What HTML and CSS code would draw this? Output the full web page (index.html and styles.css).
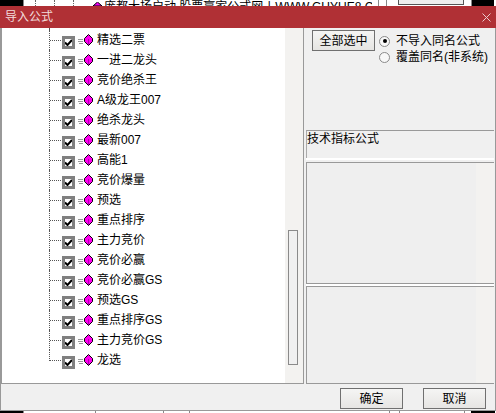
FILE: index.html
```html
<!DOCTYPE html>
<html lang="zh">
<head>
<meta charset="utf-8">
<title>导入公式</title>
<link rel="stylesheet" href="styles.css">
</head>
<body>
<svg class="defs" width="0" height="0">
  <symbol id="ck" viewBox="0 0 7 7"><path d="M0 3.500L2.500 6L7 1" fill="none" stroke="#000" stroke-width="2"/></symbol>
  <symbol id="gem" viewBox="0 0 16 12">
    <path d="M0 5.500h5M0 7.500h5M1 9.500h4" stroke="#999" stroke-width="1" shape-rendering="crispEdges"/>
    <path d="M10.500 .5L14.500 4.500V7.500L10.500 11.500L6.500 7.500V4.500Z" fill="#ff00f0" stroke="#000" stroke-width="1"/>
    <path d="M10.500 5V11" stroke="#b000b0" stroke-width="1" fill="none"/>
  </symbol>
</svg>
<div class="behind">
  <span class="black"></span>
  <i class="tick t1"></i><i class="tick t2"></i><i class="tick t3"></i>
  <svg class="peek" width="9" height="4" viewBox="0 0 9 4"><path d="M4.500 0L9 4H0Z" fill="#f000f0" stroke="#000" stroke-width="1"/></svg>
  <span class="behind-text">庞都大扬启动 股票赢家公式网丨WWW.GUYUE8.C</span>
  <i class="rule r1"></i><i class="rule r2"></i>
  <span class="behind-btn"></span>
  <span class="black end"></span>
</div>
<div class="dialog">
  <header class="titlebar">
    <span>导入公式</span>
    <svg class="close" width="9" height="9" viewBox="0 0 9 9"><path d="M.5.5L8.500 8.500M8.500.5L.5 8.500" stroke="#fff" stroke-width="1" opacity=".75"/></svg>
  </header>
  <div class="main">
    <section class="tree">
      <ul class="rows">
        <li class="row"><i class="branch"></i><span class="check"><svg><use href="#ck"/></svg></span><svg class="gem"><use href="#gem"/></svg><span>精选二票</span></li>
        <li class="row"><i class="branch"></i><span class="check"><svg><use href="#ck"/></svg></span><svg class="gem"><use href="#gem"/></svg><span>一进二龙头</span></li>
        <li class="row"><i class="branch"></i><span class="check"><svg><use href="#ck"/></svg></span><svg class="gem"><use href="#gem"/></svg><span>竞价绝杀王</span></li>
        <li class="row"><i class="branch"></i><span class="check"><svg><use href="#ck"/></svg></span><svg class="gem"><use href="#gem"/></svg><span>A级龙王007</span></li>
        <li class="row"><i class="branch"></i><span class="check"><svg><use href="#ck"/></svg></span><svg class="gem"><use href="#gem"/></svg><span>绝杀龙头</span></li>
        <li class="row"><i class="branch"></i><span class="check"><svg><use href="#ck"/></svg></span><svg class="gem"><use href="#gem"/></svg><span>最新007</span></li>
        <li class="row"><i class="branch"></i><span class="check"><svg><use href="#ck"/></svg></span><svg class="gem"><use href="#gem"/></svg><span>高能1</span></li>
        <li class="row"><i class="branch"></i><span class="check"><svg><use href="#ck"/></svg></span><svg class="gem"><use href="#gem"/></svg><span>竞价爆量</span></li>
        <li class="row"><i class="branch"></i><span class="check"><svg><use href="#ck"/></svg></span><svg class="gem"><use href="#gem"/></svg><span>预选</span></li>
        <li class="row"><i class="branch"></i><span class="check"><svg><use href="#ck"/></svg></span><svg class="gem"><use href="#gem"/></svg><span>重点排序</span></li>
        <li class="row"><i class="branch"></i><span class="check"><svg><use href="#ck"/></svg></span><svg class="gem"><use href="#gem"/></svg><span>主力竞价</span></li>
        <li class="row"><i class="branch"></i><span class="check"><svg><use href="#ck"/></svg></span><svg class="gem"><use href="#gem"/></svg><span>竞价必赢</span></li>
        <li class="row"><i class="branch"></i><span class="check"><svg><use href="#ck"/></svg></span><svg class="gem"><use href="#gem"/></svg><span>竞价必赢GS</span></li>
        <li class="row"><i class="branch"></i><span class="check"><svg><use href="#ck"/></svg></span><svg class="gem"><use href="#gem"/></svg><span>预选GS</span></li>
        <li class="row"><i class="branch"></i><span class="check"><svg><use href="#ck"/></svg></span><svg class="gem"><use href="#gem"/></svg><span>重点排序GS</span></li>
        <li class="row"><i class="branch"></i><span class="check"><svg><use href="#ck"/></svg></span><svg class="gem"><use href="#gem"/></svg><span>主力竞价GS</span></li>
        <li class="row last"><i class="branch"></i><span class="check"><svg><use href="#ck"/></svg></span><svg class="gem"><use href="#gem"/></svg><span>龙选</span></li>
      </ul>
      <div class="scrolltrack"><div class="thumb"></div></div>
    </section>
    <aside class="side">
      <div class="options">
        <button class="btn">全部选中</button>
        <div class="radios">
          <label class="radio"><i class="dot on"></i>不导入同名公式</label>
          <label class="radio"><i class="dot"></i>覆盖同名(非系统)</label>
        </div>
      </div>
      <div class="caption">技术指标公式</div>
      <div class="pane tall"><div class="panetrack"></div></div>
      <div class="pane short"><div class="panetrack"></div></div>
    </aside>
  </div>
  <footer class="actions">
    <button class="btn">确定</button>
    <button class="btn">取消</button>
  </footer>
</div>
<div class="under">
  <span class="black"></span>
  <i class="rule u1"></i><i class="rule u2"></i><i class="rule u3"></i>
  <i class="rule u4"></i><i class="rule u5"></i><i class="rule u6"></i>
  <span class="black uend"></span>
</div>
</body>
</html>
```
FILE: styles.css
```css
* { box-sizing: border-box; }
html, body { margin: 0; padding: 0; }
body {
  width: 496px;
  height: 413px;
  overflow: hidden;
  background: #fff;
  font: 12px/16px "Liberation Sans", "Noto Sans CJK SC", sans-serif;
  color: #000;
}
.defs { display: block; height: 0; }
.behind, .under {
  display: flex;
  overflow: hidden;
  background: #fff;
}
.behind { height: 6px; }
.under { height: 2px; }
.black {
  width: 23px;
  flex: none;
  background: #000;
  border-right: 1px solid #888;
  box-sizing: content-box;
}
.black.end { width: 22px; margin-left: 7px; border-right: 0; border-left: 1px solid #888; }
.tick { width: 0; height: 6px; flex: none; border-left: 1px dotted #666; }
.t1 { margin-left: 11px; }
.t2 { margin-left: 18px; }
.t3 { margin-left: 18px; }
.peek { margin: 2px 0 0 19px; flex: none; }
.behind-text {
  margin: -1px 0 0 2px;
  width: 268px;
  flex: none;
  white-space: nowrap;
  overflow: hidden;
  height: 16px;
}
.rule { width: 0; flex: none; border-left: 1px solid #888; }
.r1 { margin-left: 6px; }
.r2 { margin-left: 7px; }
.behind-btn {
  width: 66px;
  height: 5px;
  margin-left: 11px;
  flex: none;
  border: 1px solid #555;
  border-top: 0;
  background: #eee;
}
.u1 { margin-left: 71px; }
.u2 { margin-left: 67px; }
.u3 { margin-left: 25px; }
.u4 { margin-left: 199px; }
.u5 { margin-left: 9px; }
.u6 { margin-left: 64px; }
.uend { margin-left: 6px; width: 24px; border-right: 0; }
.dialog {
  height: 405px;
  display: flex;
  flex-direction: column;
  background: #f0f0f0;
  border: solid #999;
  border-width: 0 1px 1px 1px;
}
.titlebar {
  height: 22px;
  margin: 0 -1px;
  padding: 0 5px;
  flex: none;
  display: flex;
  align-items: center;
  justify-content: space-between;
  background: #b03035;
  color: #f2dcdc;
}
.main {
  height: 356px;
  flex: none;
  display: flex;
}
.tree {
  width: 303px;
  flex: none;
  display: flex;
  background: #fff;
  border: solid #999;
  border-width: 0 1px 1px 1px;
}
.rows {
  list-style: none;
  margin: 0;
  padding: 2px 0 0;
  flex: 1;
  min-width: 0;
}
.row {
  height: 20px;
  display: flex;
  align-items: center;
  padding-left: 47px;
  white-space: nowrap;
}
.branch {
  position: relative;
  width: 13px;
  height: 20px;
  flex: none;
  align-self: flex-start;
  border-left: 1px dotted #555;
  background: linear-gradient(90deg, #555 50%, transparent 50%) 0 10px / 2px 1px repeat-x;
}
.row.last .branch { height: 11px; }
.row:first-child .branch::before {
  content: "";
  position: absolute;
  left: -1px;
  top: -2px;
  height: 2px;
  border-left: 1px dotted #555;
}
.check {
  width: 13px;
  height: 13px;
  margin-top: 5px;
  flex: none;
  border: 3px solid #808080;
  background: #fff;
  display: block;
}
.check svg { width: 7px; height: 7px; display: block; }
.gem { width: 16px; height: 12px; margin: 0 3px; flex: none; }
.scrolltrack {
  width: 18px;
  flex: none;
  background: #f3f2f0;
  padding: 202px 0 0 3px;
}
.thumb {
  width: 10px;
  height: 135px;
  border: 1px solid #8a8a8a;
  background: #f0f0f0;
}
.side {
  flex: 1;
  min-width: 0;
  margin: 0 0 0 2px;
  padding-right: 1px;
  display: flex;
  flex-direction: column;
}
.options {
  height: 102px;
  flex: none;
  display: flex;
  align-items: flex-start;
  padding: 2px 0 0 6px;
}
.btn {
  width: 63px;
  height: 21px;
  padding: 0;
  font: inherit;
  color: #000;
  border: 1px solid #707070;
  background: linear-gradient(#f5f5f4, #e6e5e3);
  flex: none;
}
.radios { margin: 3px 0 0 4px; display: flex; flex-direction: column; }
.radio { display: flex; align-items: center; height: 16px; white-space: nowrap; }
.dot {
  position: relative;
  width: 11px;
  height: 11px;
  margin-right: 6px;
  border-radius: 50%;
  border: 1px solid #8a8a8a;
  background: #f8f8f8;
  flex: none;
}
.dot.on::after {
  content: "";
  position: absolute;
  left: 2.500px;
  top: 2.500px;
  width: 4px;
  height: 4px;
  border-radius: 50%;
  background: #000;
}
.caption {
  height: 28px;
  flex: none;
  border-top: 1px solid #999;
  border-left: 1px solid #aaa;
  box-shadow: 0 2px 0 #fff;
  line-height: 17px;
  white-space: nowrap;
}
.pane {
  flex: none;
  display: flex;
  justify-content: flex-end;
  border: solid #999;
  border-width: 1px 0 1px 1px;
  background: #efefef;
}
.tall { height: 122px; margin-top: 4px; }
.short { height: 98px; margin-top: 2px; box-shadow: 0 -2px 0 #fff; }
.panetrack { width: 18px; background: #f3f2f0; }
.actions {
  flex: 1;
  display: flex;
  justify-content: flex-end;
  align-items: flex-start;
  gap: 20px;
  padding: 4px 9px 0 0;
}
```
